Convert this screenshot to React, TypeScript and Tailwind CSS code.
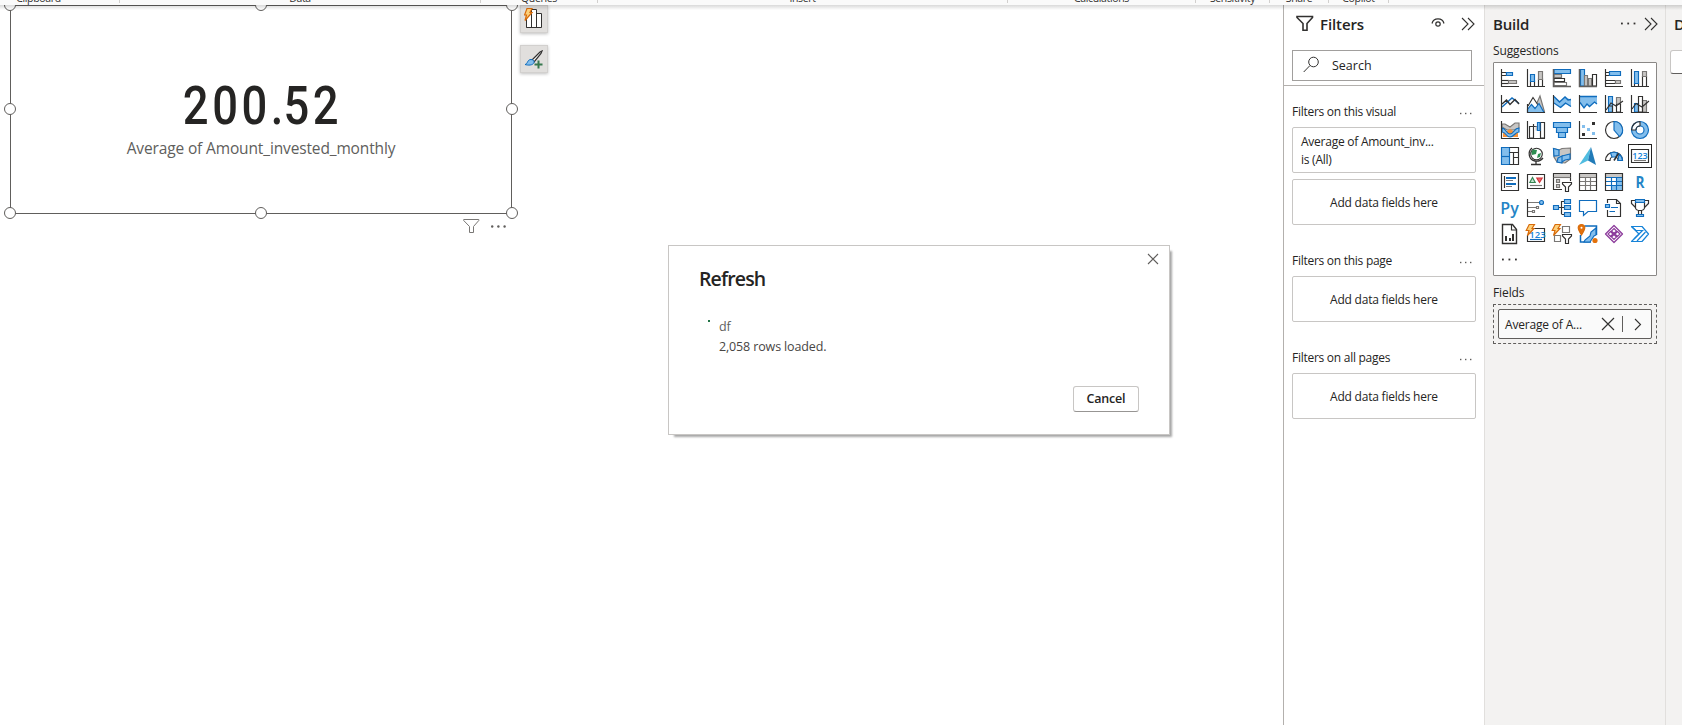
import React from "react";

const K = "#323130";
const B = "#0f6cbd";
const L = "#83beec";
const G = "#797775";
const F = "#c8c6c4";

type P = { children: React.ReactNode };
const I = ({ children }: P) => (
  <svg viewBox="0 0 18 18" className="block h-[18px] w-[18px] overflow-visible" fill="none" strokeWidth="1.15">
    {children}
  </svg>
);
const Axis = () => <path d="M.5 0V17.5H18" stroke={K} />;
const Bolt = () => <path d="M3.2-.5H8.5L6 3.5H8L1.5 10.5L3 5.5H.2Z" transform="translate(-1 0)" fill="#fcd07b" stroke="#d86b0a" />;
const MiniFunnel = () => <path d="M9.5 9.5H18.5V11L15.5 14V18.5H12.5V14L9.5 11Z" fill="#fff" stroke={K} />;

const icons: React.ReactNode[] = [
  <><path d="M1 3.5H5.5V6.5H1" stroke={K} /><path d="M5.5 3.5H11.5V6.5H5.5Z" fill={L} stroke={B} /><path d="M1 11.5H8" stroke={K} /><path d="M1 14.5H8" stroke={K} /><path d="M7.5 11.5H15.5V14.5H7.5Z" fill={F} stroke={G} /><Axis /></>,
  <><path d="M3.5 12H7.5V17.5H3.5Z" stroke={K} /><path d="M3.5 5.5H7.5V12.5H3.5Z" fill={L} stroke={B} /><path d="M11.5 10H15.5V17.5H11.5Z" stroke={K} /><path d="M11.5 2.5H15.5V10.5H11.5Z" fill={F} stroke={G} /><Axis /></>,
  <><path d="M1 .5H17.5V4.5H1Z" fill={L} stroke={B} /><path d="M1 5.5H8.5V8.5H1Z" fill={F} stroke={G} /><path d="M1 9.5H11.5V12.5H1Z" fill="#fff" stroke={K} /><path d="M1 13.5H13.5V16.5H1Z" fill="#fff" stroke={G} /><path d="M.5 0V17.5H18" stroke="#605e5c" strokeWidth="1.5" /></>,
  <><path d="M1.5.5H5.5V17H1.5Z" fill={L} stroke={B} /><path d="M5.5 6.5H8.5V17H5.5Z" fill={F} stroke={G} /><path d="M9.5 9.5H12.5V17H9.5Z" fill={F} stroke={G} /><path d="M13.5 5.5H17.5V17H13.5Z" fill="#fff" stroke={K} /><path d="M.5 0V17.5H18" stroke="#605e5c" strokeWidth="1.5" /></>,
  <><path d="M1 3.5H4.5V6.5H1M1 11.5H10.5V14.5H1" stroke={K} /><path d="M4.5 2.5H15.5V6.5H4.5Z" fill={L} stroke={B} /><path d="M10.5 11.5H15.5V14.5H10.5Z" fill={F} stroke={G} /><Axis /></>,
  <><path d="M3.5 14H7.5V17.5H3.5Z" stroke={K} /><path d="M3.5 2.5H7.5V14.5H3.5Z" fill={L} stroke={B} /><path d="M11.5 7.5H15.5V17.5H11.5Z" stroke={K} /><path d="M11.5 2.5H15.5V7.5H11.5Z" fill={F} stroke={G} /><Axis /></>,
  <><path d="M1 12L11 3L18 8.5" stroke={B} strokeWidth="1.4" /><path d="M1 9L5.5 5L9 9.5L14 4.5L18 9" stroke={K} strokeWidth="1.4" /><Axis /></>,
  <><path d="M9 10L13 1L17.5 17H12Z" fill={F} stroke={G} /><path d="M1 11L6 2.5L12 11.5" stroke={K} fill="#fff" /><path d="M.5 17.5V14.5L4.5 9.5L8 13.5L12 8.5L17 17.5Z" fill={L} stroke={B} /><path d="M.5 9V17.5H18" stroke={K} /></>,
  <><path d="M1 1.5L7.5 6.5L12 1.5L18 5V11.5L13 9L8 13L1 8Z" fill={L} /><path d="M1 1.5L6.5 7L12 2L15 5L18 4.500M1 8L7.500 12.500L12.500 8L18 11.500" stroke={B} strokeWidth="1.3" /><Axis /></>,
  <><path d="M1 1.5H18V9L15 7.500L10.500 11.500L8 9L5 13L1 8Z" fill={L} /><path d="M1 1.5H18M1 7.500L5 13L8 9L10.500 11.500L15.500 7L18 9" stroke={B} strokeWidth="1.3" /><Axis /></>,
  <><path d="M3.5 1.5H7.5V17H3.5Z" fill={L} stroke={B} /><path d="M11.5 2.5H15.5V9H11.5Z" fill={F} stroke={G} /><path d="M3.5 11H7.5V17M11.5 9V17H15.5V9M1 15L6 8L11 11L18 6" stroke={K} /><Axis /></>,
  <><path d="M3.5 8.5H7.5V17H3.5Z" fill={L} stroke={B} /><path d="M11.5 5.5H15.5V17H11.5Z" fill={F} stroke={G} /><path d="M7.5 1.5H11.5V17H7.5ZM1 14L5 8.5L11 12L18 6" stroke={K} /><Axis /></>,
  <><path d="M1 3H4L9 6L14 2H18V7L13 9H6L1 6Z" fill={F} stroke={G} /><path d="M2 10H6L9 8L12 10H17V16H2Z" fill="#f79238" /><path d="M1 7C5 7 5 13 9 13S13 7 18 7V11C14 11 13 16 9 16S5 11 1 11Z" fill={L} stroke={B} /><Axis /></>,
  <><path d="M2.5 5.5H6.5V17H2.5ZM6.500 5.500V3M13.5 1.5H17.5V17H13.5Z" stroke={K} /><path d="M6.500 5.500H10.500V9.500" fill="#fff" stroke={K} /><path d="M8.5 5.5H10.500V9.500H8.5Z" fill={F} /><path d="M10.500 1.500H13V9.500H10.500Z" fill={L} stroke={B} /><Axis /></>,
  <><path d="M.5 1.5H17.5V6.5H.5ZM3.5 6.5H14.5V11.5H3.5ZM5.5 11.5H12.5V16.5H5.5Z" fill={L} stroke={B} /></>,
  <><path d="M3 4H6V7H3ZM8 7H11V10H8ZM13 11H16V14H13Z" fill={L} /><path d="M13 1H16V4H13ZM3 12H6V15H3Z" fill={K} /><Axis /></>,
  <><circle cx="9" cy="9" r="8.5" fill="#fff" stroke={K} /><path d="M9 .5A8.5 8.5 0 0 1 14.5 15.5L9 9Z" fill={L} stroke={B} /></>,
  <><circle cx="9" cy="9" r="6.2" stroke={L} strokeWidth="4.6" /><path d="M9 2.8A6.2 6.2 0 0 0 2.8 9" stroke="#fff" strokeWidth="4.6" /><circle cx="9" cy="9" r="8.5" stroke={B} /><circle cx="9" cy="9" r="4" stroke={B} /><path d="M9 .5A8.5 8.5 0 0 0 .5 9M9 5V.5M5 9H.5M5 9A4 4 0 0 1 9 5" stroke={K} /></>,
  <><path d="M.5.5H17.5V17.5H.5Z" fill="#fff" /><path d="M.5.5H8.5V17.5H.5Z" fill={L} stroke={B} /><path d="M.5 9.5H8.5" stroke={B} /><path d="M8.5.5H17.5V17.5H8.5M8.5 5.5H17.5M12.5 5.5V17.5M12.5 10.5H17.5" stroke={K} /></>,
  <><circle cx="9.500" cy="7" r="5.8" fill="#fff" stroke={K} /><path d="M6 2.5L10 3L9 7L5 8L4.5 5ZM11 7L14 6L13 10L10 11Z" fill="#2f8f52" /><path d="M5 1C0 5 2 13 8 14C11 14.6 14 13.5 16 11M9 14V17M4 17.5H14" stroke={K} strokeWidth="1.3" /></>,
  <><path d="M.5 1.5L6 3L9 1.5L17.5 1V12L12 16L4 15L1 10Z" fill={F} stroke={G} /><path d="M.5 1.5L6 3V8.5L1 9ZM9 9L17 7V12L12 13L9 15ZM5 11L9 9V16L4 15Z" fill={L} stroke={B} /></>,
  <><path d="M12 0L0 18L9 13.5Z" fill="#50bce0" /><path d="M12 0L17 18L9 13.5Z" fill="#217bb8" /></>,
  <><path d="M.5 13.5A8.5 8.5 0 0 1 17.5 13.5H13A4 4 0 0 0 5 13.5Z" fill="#fff" stroke={K} /><path d="M5.5 6A8.5 8.5 0 0 1 12.5 6L11 10H7ZM14 7A8.5 8.5 0 0 1 17.5 13.5H13Z" fill={L} stroke={B} /><path d="M13.5 6.5L9 13.5" stroke={K} strokeWidth="1.6" /></>,
  <><path d="M.5 2.5H17.5V15.5H.5Z" fill="#fff" stroke={K} /><text x="9" y="12" textAnchor="middle" fontSize="9" fontFamily="Open Sans" fontWeight="600" fill="#1683d8">123</text><path d="M3 13.5H15" stroke={G} /></>,
  <><path d="M.5.5H17.5V17.5H.5Z" fill="#fff" stroke={K} /><path d="M3.5 3V15" stroke={K} /><path d="M5 5H15M5 11H15" stroke={B} strokeWidth="1.8" /><path d="M5 7.5H12M5 13.5H11" stroke={G} /></>,
  <><path d="M.5 1.5H17.5V15.5H.5Z" fill="#fff" stroke={K} /><path d="M2.8 9.5L5.5 4.5L8.2 9.5Z" fill="#c2e3cc" stroke="#378553" /><path d="M9.8 5H15.2L12.5 9.5Z" fill="#ef6874" stroke="#d13438" /><path d="M3 12.5H15" stroke={G} /></>,
  <><path d="M17.5 8V.5H.5V16.5H9" stroke={K} /><path d="M1 1H17V4H1Z" fill={F} /><path d="M.5 4.5H17.5" stroke={G} /><path d="M3.5 6.5H6.5V9.5H3.5ZM3.5 11.5H6.5V14.5H3.5Z" fill={F} stroke={G} /><MiniFunnel /></>,
  <><path d="M.5.5H17.5V17.5H.5Z" fill="#fff" /><path d="M1 1H17V4H1Z" fill={F} /><path d="M.5 4.5H17.5M.5 8.5H17.5M.5 12.5H17.5M6.5 4V17.5M11.5 4V17.5" stroke={G} /><path d="M.5.5H17.5V17.5H.5Z" stroke={K} /></>,
  <><path d="M.5.5H17.5V17.5H.5Z" fill="#fff" /><path d="M1 1H17V4H1Z" fill={F} /><path d="M11 4.5H17V17H6V12.5H11Z" fill={L} /><path d="M.5 4.5H17.5M.5 8.5H17.5M.5 12.5H17.5M6.5 4V17.5M11.5 4V17.5" stroke={B} /><path d="M.5.5H17.5V17.5H.5Z" stroke={K} /></>,
  <><text x="9" y="14.5" textAnchor="middle" fontSize="16.500" fontFamily="Open Sans" fontWeight="700" fill="#2484c6" textLength="9" lengthAdjust="spacingAndGlyphs">R</text></>,
  <><text x="8.500" y="14.5" textAnchor="middle" fontSize="17" fontFamily="Open Sans" fontWeight="600" fill="#2484c6" textLength="18.500" lengthAdjust="spacingAndGlyphs">Py</text></>,
  <><path d="M1 3.5H13M1 8.5H9M1 12.5H5" stroke={G} /><circle cx="14.5" cy="3.5" r="2" fill={L} stroke={B} /><path d="M9.5 7.5H11.5V9.5H9.5ZM5.5 11.5H7.5V13.5H5.5Z" stroke={G} /><Axis /></>,
  <><path d="M5 8.5H11M8.5 2V15M8.5 2.5H11M8.5 15.5H11" stroke={K} /><path d="M.5 6.5H5.5V10.5H.5ZM11.5.5H17.5V4.5H11.5ZM11.5 6.5H17.5V10.5H11.5ZM11.5 13.5H17.5V17.5H11.5Z" fill={L} stroke={B} /></>,
  <><path d="M.5 1.5H17.5V12.5H9L4.5 16.5V12.5H.5Z" fill="#fff" stroke={B} strokeWidth="1.2" /></>,
  <><path d="M2.5 4V.5H11.5L15.5 4.5V17.5H2.5V11M11.5.5V4.5H15.5" stroke={K} /><path d="M.5 5.5H4.5V8.5H.5Z" fill={L} stroke={B} /><path d="M6 8.5H13M4.5 12.5H10" stroke={B} /></>,
  <><path d="M4.5 1.5H.5V4.5L4.5 8.5M13.5 1.5H17.5V4.5L13.5 8.5M4.5 3V9Q5 11.5 9 11.5T13.5 9V3M7.5 11.5V15M10.5 11.5V15" stroke={K} strokeWidth="1.2" /><path d="M4.5.5H13.5V3.5H4.5ZM5.5 15.5H12.5V17.5H5.5Z" fill={L} stroke={B} /></>,
  <><path d="M1.5-.5H11.5L15.500 4.500V18.5H1.5Z" fill="#fff" stroke={K} strokeWidth="1.4" /><path d="M10.500-.5V5H15.500" stroke={K} /><path d="M4 11H6V16H4ZM8 13H10V16H8ZM11 9H13V16H11Z" fill={K} /></>,
  <><path d="M2 3.5H17.5V16.5H.5V10" fill="#fff" stroke={K} /><text x="10.500" y="13" textAnchor="middle" fontSize="9.5" fontFamily="Open Sans" fontWeight="600" fill="#1683d8">123</text><path d="M3 14.5H15" stroke={B} /><Bolt /></>,
  <><path d="M9.5 1.5H16.5V7.5H9.5ZM1.5 10.5H7.5V16.5H1.5Z" stroke={G} /><Bolt /><MiniFunnel /></>,
  <><path d="M5.500 1H17.500V10M1.500 10V17H12" fill="#fff" stroke={B} strokeWidth="1.5" /><path d="M17 3L12 7L11 11L6 15L5 17H11L15 11L17 10Z" fill={L} stroke={B} /><path d="M2.5 10C0 6-.8 4.500-.8 2.500Q-.5-.5 2.500-.5T5.800 2.500C5.800 4.500 5 6 2.500 10Z" fill="#e3710b" stroke="#d86b0a" /><circle cx="2.500" cy="2.700" r="1" fill="#fff" /><circle cx="16" cy="15.500" r="2.600" fill="#e3710b" /></>,
  <><path d="M9 .5L17.500 9L9 17.500L.5 9Z" fill="#fff" stroke="#8d3c9c" strokeWidth="1.300" strokeLinejoin="round" /><path d="M9 3.500L11.500 6L9 8.500L6.500 6ZM9 9.500L11.500 12L9 14.500L6.500 12ZM12.500 6.500L15 9L12.500 11.500L10 9ZM5.500 6.500L8 9L5.500 11.500L3 9Z" stroke="#8d3c9c" /></>,
  <><path d="M.5 1.500H11L17.500 9L11 16.500H.5L8 9Z" fill="#fff" stroke="#1683d8" strokeWidth="1.200" strokeLinejoin="round" /><path d="M.5 1.500L5 5.500H12.500M3 14L11.500 5.500M6 16L14.500 7" stroke="#1683d8" strokeWidth="1.200" /></>,
];

const Dots = ({ c, w, r, g }: { c: string; w: number; r: number; g: number }) => (
  <svg width={w} height="3" viewBox={`0 0 ${w} 3`} className="block" fill={c}>
    {[0, 1, 2].map((i) => <rect key={i} x={i * g} y={(3 - r) / 2} width={r} height={r} rx={r > 2 ? r / 2 : 0} />)}
  </svg>
);
const Chevrons = () => (
  <svg width="14" height="14" viewBox="0 0 14 14" fill="none" stroke={K} strokeWidth="1.1"><path d="M1 1L7 7L1 13M7 1L13 7L7 13" /></svg>
);

const ribbon: [string, string][] = [
  ["Clipboard", "w-[162px] -ml-[42px]"], ["Data", "w-[361px]"], ["Queries", "w-[117px]"], ["Insert", "w-[410px]"],
  ["Calculations", "w-[188px]"], ["Sensitivity", "w-[74px]"], ["Share", "w-[59px]"], ["Copilot", "w-[60px]"],
];

const AddCard = () => (
  <div className="flex h-[46px] items-center justify-center rounded-[2px] border border-[#c8c6c4] bg-white pt-px tracking-[-0.22px]">Add data fields here</div>
);
const Section = ({ title }: { title: string }) => (
  <div className="flex h-[24px] items-start justify-between pr-1 leading-[18px] tracking-[-0.27px]">
    <span>{title}</span><span className="pt-[9px]"><Dots c="#605e5c" w={12} r={1.4} g={5} /></span>
  </div>
);

const handles = [
  "left-[4px] top-[-6px]", "left-[255px] top-[-6px]", "left-[506px] top-[-6px]", "left-[4px] top-[98px]",
  "left-[506px] top-[98px]", "left-[4px] top-[202px]", "left-[255px] top-[202px]", "left-[506px] top-[202px]",
];

export default function App() {
  return (
    <div className="relative flex h-[725px] w-[1682px] flex-col overflow-hidden bg-white font-['Open_Sans',sans-serif] text-[12px] text-[#252423]">
      <header className="relative z-10 flex h-[5px] shrink-0 items-end overflow-hidden bg-[#fafafa] text-[10.5px] tracking-[-0.35px] text-[#323130]">
        {ribbon.map(([t, w]) => (
          <div key={t} className={`flex h-[14px] shrink-0 items-end justify-center ${w}`}>
            <span className="flex-1 text-center leading-[14px]">{t}</span>
            <span className="mb-[2px] h-3 w-px bg-[#d2d0ce]" />
          </div>
        ))}
      </header>
      <div className="flex min-h-0 flex-1">
        <main className="relative flex-1 overflow-hidden">
          <div className="absolute left-[10px] top-0 flex h-[209px] w-[502px] flex-col items-center border border-[#605e5c] pt-[69px]">
            <div className="h-[62px] origin-center scale-x-[0.84] pl-[4px] font-[Roboto] text-[54px] font-medium leading-[62px] tracking-[4.200px]">200<span className="tracking-[0px]">.</span>52</div>
            <div className="h-[22px] text-[15.500px] leading-[22px] tracking-[-0.140px] text-[#605e5c]">Average of Amount_invested_monthly</div>
          </div>
          {handles.map((h) => <span key={h} className={`absolute h-[12px] w-[12px] rounded-full border border-[#605e5c] bg-white ${h}`} />)}
          <div className="absolute left-[463px] top-[213px] flex items-center gap-[11px]">
            <svg width="17" height="16" viewBox="0 0 17 16" fill="none" stroke={G}><path d="M.7 1.500H15.800V2.500L10.500 8.500V14.500H6.500V8.500L.7 2.500Z" /></svg>
            <Dots c="#605e5c" w={16} r={2.4} g={6.2} />
          </div>
          <div className="absolute left-[520px] top-0 flex flex-col gap-[12px]">
            <div className="flex h-7 w-7 items-center justify-center border border-[#d2d0ce] bg-[#e1dfdd] shadow-[0_1px_3px_rgba(0,0,0,0.25)]">
              <svg width="20" height="22" viewBox="0 0 20 22" fill="none"><path d="M2.500 19.500V5.500H7.500V19.500ZM7.500 19.500V1.500H12.500V19.500M12.500 5.500H17.500V19.500H2.500" fill="#fff" stroke={K} /><path d="M3 .5H8L6 4.500H8L1 12.500L2.500 7H.5Z" fill="#fcd07b" stroke="#d86b0a" strokeWidth="1.200" /></svg>
            </div>
            <div className="flex h-7 w-7 items-center justify-center border border-[#d2d0ce] bg-[#e1dfdd] pt-px shadow-[0_1px_3px_rgba(0,0,0,0.25)]">
              <svg width="20" height="20" viewBox="0 0 20 20" fill="none"><path d="M8 10L16 2L18 1L17 3.500L10 12Z" fill="#fff" stroke={K} strokeWidth="1.200" /><path d="M1 14.500C4 14 3 9.500 7 9.500C9 9.500 10.500 11 10 12.500C9 15.500 4 15.500 1 14.500Z" fill={L} stroke={B} /><path d="M14.500 10.500V18.500M10.500 14.500H18.500" stroke="#37784e" strokeWidth="2" /></svg>
            </div>
          </div>
        </main>
        <aside className="flex w-[202px] shrink-0 flex-col border-l border-r border-l-[#b3b0ad] border-r-[#e1dfdd] bg-white">
          <div className="flex h-[81px] shrink-0 flex-col border-b border-[#b3b0ad] pl-2 pr-[12px]">
            <div className="flex h-[45px] items-start pl-[4px] pt-[9px]">
              <svg width="18" height="20" viewBox="0 0 18 20" className="mr-[6px]" fill="none" stroke={K} strokeWidth="1.600"><path d="M1 2.500H16.500V3.500L11 9.500V16.200H7V9.500L1 3.500Z" /></svg>
              <span className="text-[15px] font-semibold leading-[20px] tracking-[-0.1px]">Filters</span>
              <svg width="14" height="11" viewBox="0 0 14 11" className="ml-auto mr-4 mt-[3px]" fill="none" stroke={K} strokeWidth="1.200"><path d="M1 6.500A6.200 6.200 0 0 1 13 6.500" /><circle cx="7" cy="7" r="2.200" /></svg>
              <span className="-mr-[3px] mt-[3px]"><Chevrons /></span>
            </div>
            <div className="flex h-[31px] items-center border border-[#a19f9d] pl-[10px]">
              <svg width="17" height="17" viewBox="0 0 17 17" fill="none" stroke={K} className="-mt-[2px]"><circle cx="10.500" cy="6" r="4.800" /><path d="M7 9.500L.7 16" /></svg>
              <span className="ml-[12px] pt-px text-[12.500px]">Search</span>
            </div>
          </div>
          <div className="flex flex-col pl-2 pr-[8px] pt-[17px]">
            <Section title="Filters on this visual" />
            <div className="h-[46px] rounded-[2px] border border-[#c8c6c4] pl-2 pt-[5px] leading-[18px] tracking-[-0.25px]">
              <div>Average of Amount_inv...</div><div>is (All)</div>
            </div>
            <div className="mb-[27px] mt-[6px]"><AddCard /></div>
            <Section title="Filters on this page" />
            <div className="mb-[27px]"><AddCard /></div>
            <Section title="Filters on all pages" />
            <AddCard />
          </div>
        </aside>
        <aside className="flex w-[181px] shrink-0 flex-col border-r border-[#e1dfdd] bg-[#f3f2f1] pl-2 pr-2">
          <div className="flex h-[37px] items-start pt-[9px]">
            <span className="text-[15px] font-semibold leading-[20px] tracking-[-0.2px]">Build</span>
            <span className="ml-auto mr-[8px] mt-[8px]"><Dots c={K} w={15} r={1.8} g={6.3} /></span>
            <span className="-mr-px mt-[3px]"><Chevrons /></span>
          </div>
          <div className="h-[20px] leading-[18px] tracking-[-0.13px]">Suggestions</div>
          <div className="h-[214px] rounded-[1px] border border-[#8a8886] bg-white pl-[3px] pt-[2px]">
            <div className="grid grid-cols-[repeat(6,26px)] auto-rows-[26px]">
              {icons.map((ic, i) => (
                <div key={i} className={`flex items-center justify-center ${i === 23 ? "m-px border border-[#252423]" : ""}`}><I>{ic}</I></div>
              ))}
            </div>
            <div className="pl-[5px] pt-[11px]"><Dots c={K} w={16} r={1.800} g={6.500} /></div>
          </div>
          <div className="mt-[8px] h-[20px] leading-[18px] tracking-[-0.1px]">Fields</div>
          <div className="h-[40px] border border-dashed border-[#605e5c] p-[4px]">
            <div className="flex h-[30px] items-center rounded-[2px] border border-[#605e5c] bg-[#fafafa] pl-[6px]">
              <span className="w-[96px] pt-px tracking-[-0.18px]">Average of A...</span>
              <svg width="14" height="14" viewBox="0 0 14 14" fill="none" stroke={K} strokeWidth="1.200"><path d="M1 1L13 13M13 1L1 13" /></svg>
              <span className="ml-[7px] h-4 w-px bg-[#605e5c]" />
              <svg width="8" height="13" viewBox="0 0 8 13" className="ml-[11px]" fill="none" stroke={K} strokeWidth="1.100"><path d="M1 1L6.500 6.500L1 12" /></svg>
            </div>
          </div>
        </aside>
        <aside className="flex w-[16px] shrink-0 flex-col overflow-hidden bg-[#f3f2f1]">
          <div className="h-[45px] pl-[8px] pt-[9px] text-[15px] font-semibold leading-[20px]">Data</div>
          <div className="ml-[4px] h-[24px] w-[60px] rounded-[3px] border border-[#c8c6c4] border-b-[#605e5c] bg-white" />
        </aside>
      </div>
      <div className="absolute left-0 top-[5px] h-[5px] w-full bg-gradient-to-b from-black/15 to-transparent" />
      <section className="absolute left-[668px] top-[245px] flex h-[190px] w-[502px] flex-col border border-[#c8c6c4] bg-white shadow-[4px_4px_2px_-2px_rgba(0,0,0,0.35)]">
        <svg width="12" height="12" viewBox="0 0 12 12" className="absolute right-[10px] top-[7px]" fill="none" stroke="#605e5c" strokeWidth="1.100"><path d="M1 1L11 11M11 1L1 11" /></svg>
        <h1 className="h-[66px] pl-[30px] pt-[18px] text-[19.500px] font-semibold leading-[30px] tracking-[-0.85px]">Refresh</h1>
        <div className="flex h-[74px] pl-[39px] pt-[5px] text-[12.500px] leading-[20px] text-[#484644]">
          <span className="mr-[9px] mt-[3px] h-[2px] w-[2px] bg-[#217346]" />
          <div className="tracking-[-0.14px]"><div className="text-[#605e5c]">df</div><div>2,058 rows loaded.</div></div>
        </div>
        <div className="flex justify-end pr-[30px]">
          <button className="h-[26px] w-[66px] rounded-[3px] border border-[#c8c6c4] border-b-[#979593] bg-white pt-px text-[12.500px] font-semibold tracking-[-0.2px]">Cancel</button>
        </div>
      </section>
    </div>
  );
}
